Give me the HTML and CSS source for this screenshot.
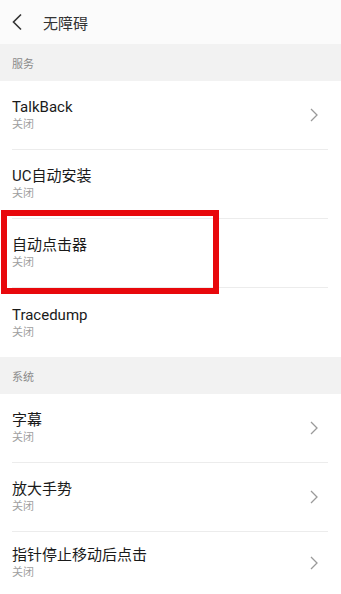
FILE: index.html
```html
<!DOCTYPE html>
<html lang="zh">
<head>
<meta charset="utf-8">
<link rel="stylesheet" href="styles.css">
</head>
<body>
<div class="page">
  <header class="topbar">
    <svg class="back" width="12" height="18" viewBox="0 0 12 18"><path d="M10 1.5 L2.5 9 L10 16.5" fill="none" stroke="#333" stroke-width="1.6"/></svg>
    <span class="title">无障碍</span>
  </header>

  <div class="section">服务</div>
  <div class="row">
    <div class="text"><div class="name">TalkBack</div><div class="sub">关闭</div></div>
    <svg class="chev" width="8" height="14" viewBox="0 0 8 14"><path d="M1 1 L7 7 L1 13" fill="none" stroke="#9a9a9a" stroke-width="1.3"/></svg>
  </div>
  <div class="row">
    <div class="text"><div class="name">UC自动安装</div><div class="sub">关闭</div></div>
  </div>
  <div class="row marked">
    <div class="text"><div class="name">自动点击器</div><div class="sub">关闭</div></div>
    <div class="redbox"></div>
  </div>
  <div class="row last">
    <div class="text"><div class="name">Tracedump</div><div class="sub">关闭</div></div>
  </div>

  <div class="section">系统</div>
  <div class="row">
    <div class="text"><div class="name">字幕</div><div class="sub">关闭</div></div>
    <svg class="chev" width="8" height="14" viewBox="0 0 8 14"><path d="M1 1 L7 7 L1 13" fill="none" stroke="#9a9a9a" stroke-width="1.3"/></svg>
  </div>
  <div class="row">
    <div class="text"><div class="name">放大手势</div><div class="sub">关闭</div></div>
    <svg class="chev" width="8" height="14" viewBox="0 0 8 14"><path d="M1 1 L7 7 L1 13" fill="none" stroke="#9a9a9a" stroke-width="1.3"/></svg>
  </div>
  <div class="row short last">
    <div class="text"><div class="name">指针停止移动后点击</div><div class="sub">关闭</div></div>
    <svg class="chev" width="8" height="14" viewBox="0 0 8 14"><path d="M1 1 L7 7 L1 13" fill="none" stroke="#9a9a9a" stroke-width="1.3"/></svg>
  </div>
  <div class="navedge"></div>
</div>
</body>
</html>
```

FILE: styles.css
```css
html, body {
  margin: 0;
  padding: 0;
  background: #ffffff;
}
.page {
  width: 341px;
  height: 594px;
  overflow: hidden;
  font-family: Roboto, "Noto Sans CJK SC", sans-serif;
  display: flex;
  flex-direction: column;
}
.topbar {
  height: 44px;
  flex: none;
  display: flex;
  align-items: center;
  background: #fbfbfb;
  padding-left: 11px;
  box-sizing: border-box;
}
.back {
  display: block;
}
.title {
  margin-left: 20px;
  font-size: 15px;
  color: #333;
}
.section {
  height: 37px;
  flex: none;
  background: #f2f2f2;
  display: flex;
  align-items: center;
  padding-left: 12px;
  font-size: 11px;
  color: #8a8a8a;
}
.row {
  position: relative;
  height: 69px;
  flex: none;
  display: flex;
  align-items: center;
  justify-content: space-between;
  margin-left: 12px;
  margin-right: 13px;
  border-bottom: 1px solid #ececec;
  box-sizing: border-box;
}
.row.last {
  border-bottom: none;
}
.row.short {
  height: 62px;
}
.text {
  display: flex;
  flex-direction: column;
}
.name {
  font-size: 15px;
  color: #1a1a1a;
  line-height: 20px;
}
.sub {
  font-size: 11px;
  color: #a0a0a0;
  line-height: 16px;
}
.chev {
  display: block;
  margin-right: 10px;
}
.redbox {
  position: absolute;
  left: -11px;
  top: -9px;
  width: 218px;
  height: 84px;
  border: 6px solid #e8080c;
  box-sizing: border-box;
}
.navedge {
  flex: none;
  height: 3px;
  background: #1c1c1c;
}
```
